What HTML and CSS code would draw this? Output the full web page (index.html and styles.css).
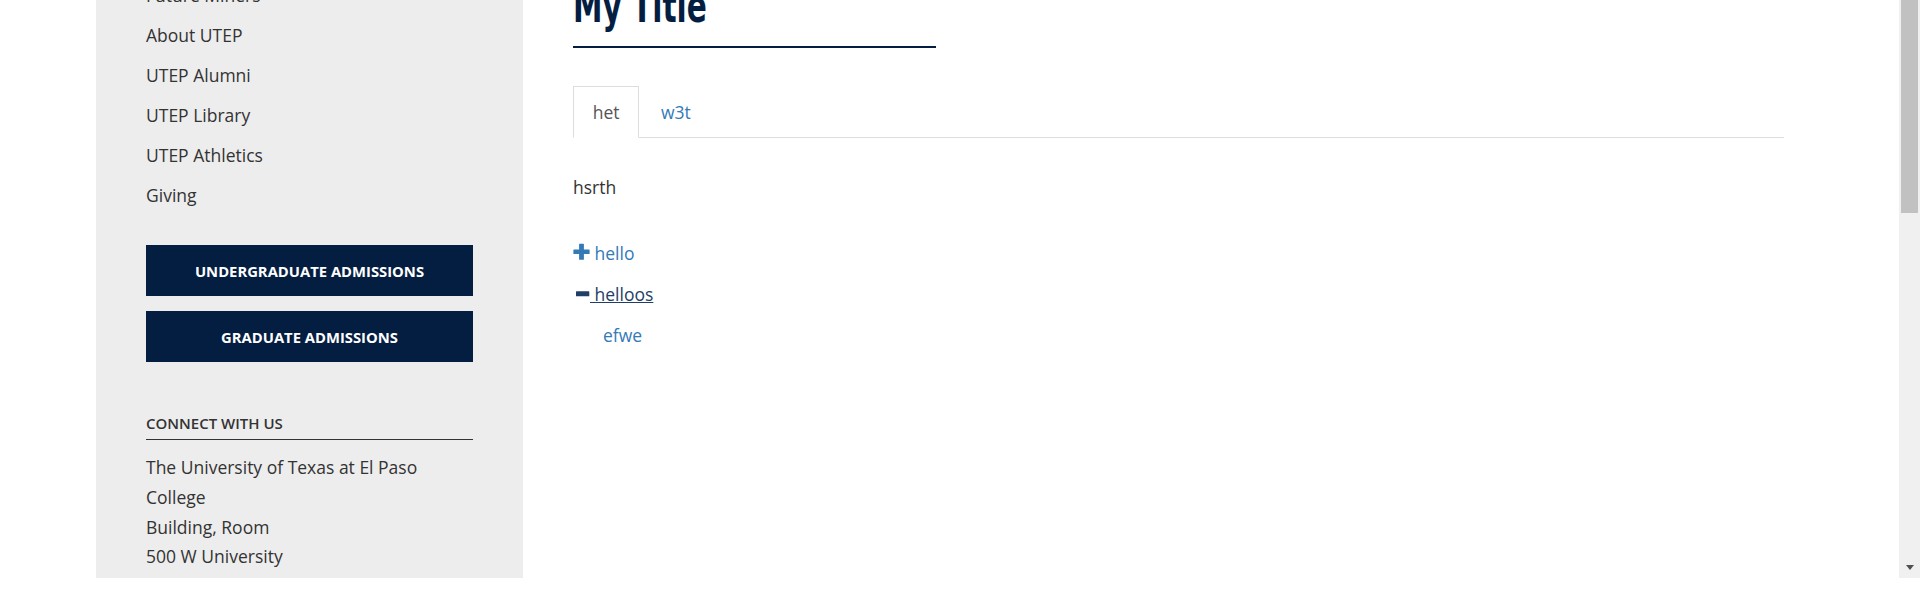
FILE: index.html
```html
<!DOCTYPE html>
<html lang="en">
<head>
<meta charset="utf-8">
<title>My Title</title>
<link rel="stylesheet" href="styles.css">
</head>
<body>
<div class="screen">
  <div class="page">
    <div class="layout">
      <aside class="sidebar">
        <ul class="side-links">
          <li><a href="#">Future Miners</a></li>
          <li><a href="#">About UTEP</a></li>
          <li><a href="#">UTEP Alumni</a></li>
          <li><a href="#">UTEP Library</a></li>
          <li><a href="#">UTEP Athletics</a></li>
          <li><a href="#">Giving</a></li>
        </ul>
        <div class="admissions">
          <a class="btn" href="#">UNDERGRADUATE ADMISSIONS</a>
          <a class="btn" href="#">GRADUATE ADMISSIONS</a>
        </div>
        <h2 class="connect-title">CONNECT WITH US</h2>
        <address class="address">The University of Texas at El Paso<br>College<br>Building, Room<br>500 W University<br>El Paso, Texas 79968</address>
      </aside>
      <main class="main">
        <h1 class="page-title"><span class="page-title-text">My Title</span></h1>
        <ul class="tabs">
          <li class="active"><a href="#">het</a></li>
          <li><a href="#">w3t</a></li>
        </ul>
        <div class="tab-content">
          <p class="tab-text">hsrth</p>
          <div class="acc">
            <a class="acc-toggle" href="#"><svg class="icon" viewBox="0 0 17 17" width="17" height="17"><path d="M6.6 0.8h3.8q0.5 0 0.5 0.5v5.2h5.2q0.5 0 0.5 0.5v3.6q0 0.5-0.5 0.5h-5.2v5.2q0 0.5-0.5 0.5h-3.8q-0.5 0-0.5-0.5v-5.2h-5.2q-0.5 0-0.5-0.5v-3.6q0-0.5 0.5-0.5h5.2v-5.2q0-0.5 0.5-0.5z" fill="#337ab7"/></svg> hello</a>
            <a class="acc-toggle open" href="#"><svg class="icon" viewBox="0 0 17 17" width="17" height="17"><rect x="3" y="7.3" width="13.3" height="5" rx="0.6" fill="#233e66"/></svg> helloos</a>
            <div class="acc-body"><a href="#">efwe</a></div>
          </div>
        </div>
      </main>
    </div>
  </div>
  <div class="scrollbar">
    <div class="thumb"></div>
    <div class="arrow"></div>
  </div>
</div>
</body>
</html>
```

FILE: styles.css
```css
html, body {
  margin: 0;
  padding: 0;
  background: #fff;
}

body {
  font-family: "Open Sans", "Noto Sans", sans-serif;
  color: #333;
}

.screen {
  display: flex;
  height: 578px;
  overflow: hidden;
}

.page {
  flex: 1;
  overflow: hidden;
  background: #fff;
}

.layout {
  display: flex;
  height: 100%;
  margin-left: 96px;
}

/* Sidebar */
.sidebar {
  flex: none;
  width: 427px;
  box-sizing: border-box;
  padding: 0 50px;
  background: #ededed;
}

.side-links {
  list-style: none;
  margin: -25px 0 0;
  padding: 0;
  font-size: 17.5px;
  line-height: 40px;
}

.side-links a {
  color: #333;
  text-decoration: none;
}

.admissions {
  display: flex;
  flex-direction: column;
  gap: 15px;
  margin-top: 30px;
}

.btn {
  display: flex;
  align-items: center;
  justify-content: center;
  height: 51px;
  background: #041e42;
  color: #fff;
  font-size: 14.8px;
  font-weight: 700;
  text-decoration: none;
}

.connect-title {
  margin: 51px 0 0;
  padding-bottom: 5.5px;
  border-bottom: 1px solid #333;
  font-size: 15px;
  font-weight: 600;
  line-height: 20px;
  color: #333;
}

.address {
  margin-top: 13.5px;
  font-style: normal;
  font-size: 17.5px;
  line-height: 29.75px;
}

/* Main */
.main {
  flex: none;
  width: 1211px;
  margin-left: 50px;
}

.page-title {
  width: 363px;
  margin: -17.4px 0 0;
  padding-bottom: 18.4px;
  border-bottom: 2px solid #041e42;
  font-family: "DejaVu Sans Condensed", "Liberation Sans", sans-serif;
  font-stretch: condensed;
  font-size: 47px;
  font-weight: 700;
  line-height: 45px;
  color: #041e42;
}

.page-title-text {
  display: inline-block;
  transform: scaleX(0.7);
  transform-origin: 0 50%;
  white-space: nowrap;
}

.tabs {
  display: flex;
  list-style: none;
  margin: 38px 0 0;
  padding: 0;
  border-bottom: 1px solid #ddd;
  font-size: 17.5px;
  line-height: 25px;
}

.tabs li {
  margin-bottom: -1px;
}

.tabs a {
  display: block;
  margin-right: 2px;
  padding: 12.5px 18.75px;
  border: 1px solid transparent;
  color: #337ab7;
  text-decoration: none;
}

.tabs .active a {
  color: #555;
  background: #fff;
  border-color: #ddd #ddd transparent;
}

.tab-text {
  margin: 36.5px 0 0;
  font-size: 17.5px;
  line-height: 25px;
}

.acc {
  display: flex;
  flex-direction: column;
  align-items: flex-start;
  gap: 16px;
  margin-top: 41px;
  font-size: 17.5px;
  line-height: 25px;
}

.acc a {
  color: #337ab7;
  text-decoration: none;
}

.acc .acc-toggle.open {
  color: #233e66;
  text-decoration: underline;
}

.icon {
  display: inline-block;
  vertical-align: baseline;
}

.acc-body {
  padding-left: 30px;
}

/* Scrollbar */
.scrollbar {
  flex: none;
  width: 21px;
  display: flex;
  flex-direction: column;
  align-items: center;
  background: #f0f0f0;
}

.thumb {
  width: 17px;
  height: 213px;
  background: #c1c1c1;
}

.arrow {
  margin-top: auto;
  margin-bottom: 8px;
  width: 0;
  height: 0;
  border-left: 4.5px solid transparent;
  border-right: 4.5px solid transparent;
  border-top: 5px solid #505050;
}
```
